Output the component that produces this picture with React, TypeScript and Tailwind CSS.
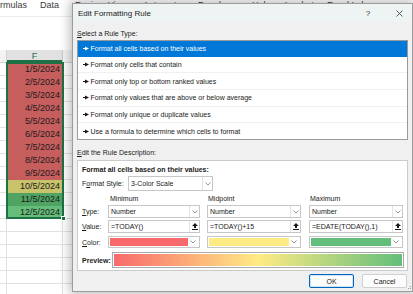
import React from "react";

const dates = [
  { d: "1/5/2024", c: "bg-[#c75e5e]" },
  { d: "2/5/2024", c: "bg-[#c75e5e]" },
  { d: "3/5/2024", c: "bg-[#c75e5e]" },
  { d: "4/5/2024", c: "bg-[#c75e5e]" },
  { d: "5/5/2024", c: "bg-[#c75e5e]" },
  { d: "6/5/2024", c: "bg-[#c75e5e]" },
  { d: "7/5/2024", c: "bg-[#c75e5e]" },
  { d: "8/5/2024", c: "bg-[#c75e5e]" },
  { d: "9/5/2024", c: "bg-[#c75e5e]" },
  { d: "10/5/2024", c: "bg-[#c9c46c]" },
  { d: "11/5/2024", c: "bg-[#4fa463]" },
  { d: "12/5/2024", c: "bg-[#66bd7a]" },
];

const ruleTypes = [
  "Format all cells based on their values",
  "Format only cells that contain",
  "Format only top or bottom ranked values",
  "Format only values that are above or below average",
  "Format only unique or duplicate values",
  "Use a formula to determine which cells to format",
];

const menu = [
  { t: "rmulas", w: "w-[40px]" },
  { t: "Data", w: "w-[35px]" },
  { t: "Review", w: "w-[33px]" },
  { t: "View", w: "w-[35px]" },
  { t: "Automate", w: "w-[55px]" },
  { t: "Developer", w: "w-[54px]" },
  { t: "Help", w: "w-[31px]" },
  { t: "Acrobat", w: "w-[44px]" },
  { t: "Excel Lab", w: "w-[50px]" },
];

const Chevron = () => (
  <svg width="6" height="4" viewBox="0 0 6 4">
    <polyline points="0.5,0.5 3,3 5.5,0.5" fill="none" stroke="#7a7a7a" strokeWidth="0.8" />
  </svg>
);

const Collapse = () => (
  <svg width="6" height="7" viewBox="0 0 6 7">
    <polygon points="3,0 6,3 4,3 4,5 2,5 2,3 0,3" fill="#1a1a1a" />
    <rect x="0" y="6" width="6" height="1" fill="#1a1a1a" />
  </svg>
);

const Pointer = ({ white }: { white?: boolean }) => (
  <svg width="6" height="5" viewBox="0 0 6 5" className="mr-[1.5px] shrink-0">
    <rect x="0" y="2" width="3" height="1" fill={white ? "#fff" : "#1a1a1a"} />
    <polygon points="2,0.5 6,2.5 2,4.5" fill={white ? "#fff" : "#1a1a1a"} />
  </svg>
);

const Select = ({ text }: { text: string }) => (
  <div className="flex h-full border border-[#c6c6c6] bg-white">
    <span className="flex flex-1 items-center pl-[2px]">{text}</span>
    <span className="flex w-[10px] items-center justify-center border-l border-[#e3e3e3]">
      <Chevron />
    </span>
  </div>
);

const ValueBox = ({ text }: { text: string }) => (
  <div className="flex h-full border border-[#c6c6c6] bg-white">
    <span className="flex flex-1 items-center pl-[2px]">{text}</span>
    <span className="flex w-[10px] items-center justify-center border-l border-[#e3e3e3]">
      <Collapse />
    </span>
  </div>
);

const ColorBox = ({ color }: { color: string }) => (
  <div className="flex h-full border border-[#c6c6c6] bg-white p-[1px]">
    <span className={`flex-1 ${color}`} />
    <span className="flex w-[10px] items-center justify-center">
      <Chevron />
    </span>
  </div>
);

const Row = ({ label, children }: { label: React.ReactNode; children: React.ReactNode[] }) => (
  <div className="flex h-full">
    <span className="flex w-[26px] items-center">{label}</span>
    <div className="w-[92px]">{children[0]}</div>
    <div className="ml-[7px] w-[94px]">{children[1]}</div>
    <div className="ml-[8px] w-[94px]">{children[2]}</div>
  </div>
);

export default function App() {
  return (
    <div className="relative h-[294px] w-[413px] overflow-hidden bg-white font-['Liberation_Sans',Arial,sans-serif] text-[#1a1a1a]">
      {/* Excel backdrop */}
      <div className="flex h-[17px] border-b border-[#ececec] bg-white text-[9px] leading-[10px] text-[#3b3b3b]">
        {menu.map((m) => (
          <span key={m.t} className={`${m.w} shrink-0 whitespace-nowrap`}>
            {m.t}
          </span>
        ))}
      </div>
      <div className="h-[33px]" />
      <div className="flex h-[13px] border-b border-[#d4d4d4] bg-[#f3f3f3] text-[9px] leading-[12px]">
        <div className="w-[7px] border-r border-[#d4d4d4]" />
        <div className="w-[56px] border-r border-[#c8c8c8] bg-[#e1e1e1] text-center text-[#1e7145] shadow-[inset_0_-2px_0_#1e7145]">
          F
        </div>
        <div className="flex-1" />
      </div>
      {dates.map((r) => (
        <div key={r.d} className="flex h-[13px] text-[9px] leading-[13px]">
          <div className="w-[7px] border-r border-b border-[#e1e1e1]" />
          <div className={`w-[56px] pr-[3px] text-right text-[#1c1c1c] ${r.c}`}>{r.d}</div>
          <div className="flex-1 border-b border-[#e1e1e1]" />
        </div>
      ))}
      {[0, 1, 2, 3, 4, 5].map((i) => (
        <div key={i} className="flex h-[13px] border-b border-[#e1e1e1]">
          <div className="w-[7px] border-r border-[#e1e1e1]" />
          <div className="w-[56px] border-r border-[#e1e1e1]" />
          <div className="flex-1" />
        </div>
      ))}

      {/* selection outline */}
      <div className="pointer-events-none absolute left-[6px] top-[62px] h-[157px] w-[58px] border-2 border-[#1e7145]" />
      <div className="absolute left-[61px] top-[216px] h-[5px] w-[5px] border border-white bg-[#1e7145]" />

      {/* Dialog */}
      <div className="absolute left-[72px] top-[3px] flex h-[289px] w-[341px] flex-col border border-[#9c9c9c] bg-[#f0f0f0] text-[7px] leading-[9px] shadow-[0_0_10px_2px_rgba(0,0,0,0.28)]">
        <div className="flex h-[18px] items-center bg-[#eef4f3] pl-[5px] text-[8px]">
          <span>Edit Formatting Rule</span>
          <span className="ml-auto w-[10px] text-center text-[8px] text-[#333]">?</span>
          <span className="ml-[22px] mr-[9px] flex w-[8px] justify-center">
            <svg width="7" height="7" viewBox="0 0 7 7">
              <path d="M0.5 0.5 L6.5 6.5 M6.5 0.5 L0.5 6.5" stroke="#333" strokeWidth="0.8" />
            </svg>
          </span>
        </div>

        <div className="flex flex-1 flex-col px-[4px]">
          <div className="h-[18px] pt-[7px]">
            <span className="underline">S</span>elect a Rule Type:
          </div>
          <div className="flex h-[100px] flex-col border border-[#9a9a9a] bg-white">
            {ruleTypes.map((t, i) => (
              <div
                key={t}
                className={`flex flex-1 items-center pl-[5px] ${
                  i === 0 ? "bg-[#0078d7] text-white" : "border-t border-[#f0f0f0]"
                } ${i === 1 ? "border-t-0" : ""}`}
              >
                <Pointer white={i === 0} />
                <span className="whitespace-nowrap">{t}</span>
              </div>
            ))}
          </div>

          <div className="h-[20px] pt-[8px]">
            <span className="underline">E</span>dit the Rule Description:
          </div>
          <div className="flex h-[111px] flex-col border border-[#cbcbcb] bg-white pl-[4px]">
            <div className="mt-[4px] font-bold leading-[10px]">Format all cells based on their values:</div>
            <div className="mt-[1px] flex h-[15px]">
              <span className="flex w-[46px] items-center">
                F<span className="underline">o</span>rmat Style:
              </span>
              <div className="w-[85px]">
                <Select text="3-Color Scale" />
              </div>
            </div>
            <div className="mt-[3px] h-[10px]">
              <Row label="">
                {[
                  <span key="a" className="pl-[2px] leading-[10px]">Minimum</span>,
                  <span key="b" className="pl-[1px] leading-[10px]">Midpoint</span>,
                  <span key="c" className="pl-[1px] leading-[10px]">Maximum</span>,
                ]}
              </Row>
            </div>
            <div className="mt-[1px] h-[13px]">
              <Row label={<span><span className="underline">T</span>ype:</span>}>
                {[<Select key="a" text="Number" />, <Select key="b" text="Number" />, <Select key="c" text="Number" />]}
              </Row>
            </div>
            <div className="mt-[2px] h-[13px]">
              <Row label={<span><span className="underline">V</span>alue:</span>}>
                {[
                  <ValueBox key="a" text="=TODAY()" />,
                  <ValueBox key="b" text="=TODAY()+15" />,
                  <ValueBox key="c" text="=EDATE(TODAY(),1)" />,
                ]}
              </Row>
            </div>
            <div className="mt-[3px] h-[12px]">
              <Row label={<span><span className="underline">C</span>olor:</span>}>
                {[
                  <ColorBox key="a" color="bg-[#f8696b]" />,
                  <ColorBox key="b" color="bg-[#ffeb84]" />,
                  <ColorBox key="c" color="bg-[#63be7b]" />,
                ]}
              </Row>
            </div>
            <div className="mt-[4px] flex h-[16px]">
              <span className="flex w-[30px] items-center font-bold">Preview:</span>
              <div className="w-[292px] border border-[#a9a9a9] bg-white p-[1px]">
                <div className="h-full bg-[linear-gradient(to_right,#f8696b,#ffeb84,#63be7b)]" />
              </div>
            </div>
          </div>

          <div className="mt-[3px] flex h-[14px] justify-end gap-[8px] pr-[1px]">
            <button className="w-[45px] rounded-[2px] border border-[#0067c0] bg-[#fdfdfd] shadow-[inset_0_0_0_1px_#cfe3f6]">
              OK
            </button>
            <button className="w-[45px] rounded-[2px] border border-[#d0d0d0] bg-[#fdfdfd]">Cancel</button>
          </div>
        </div>
        <svg width="4" height="4" viewBox="0 0 4 4" className="absolute bottom-[1px] right-[1px]">
          <rect x="3" y="0" width="1" height="1" fill="#9a9a9a" />
          <rect x="1" y="2" width="1" height="1" fill="#9a9a9a" />
          <rect x="3" y="2" width="1" height="1" fill="#9a9a9a" />
        </svg>
      </div>
    </div>
  );
}
